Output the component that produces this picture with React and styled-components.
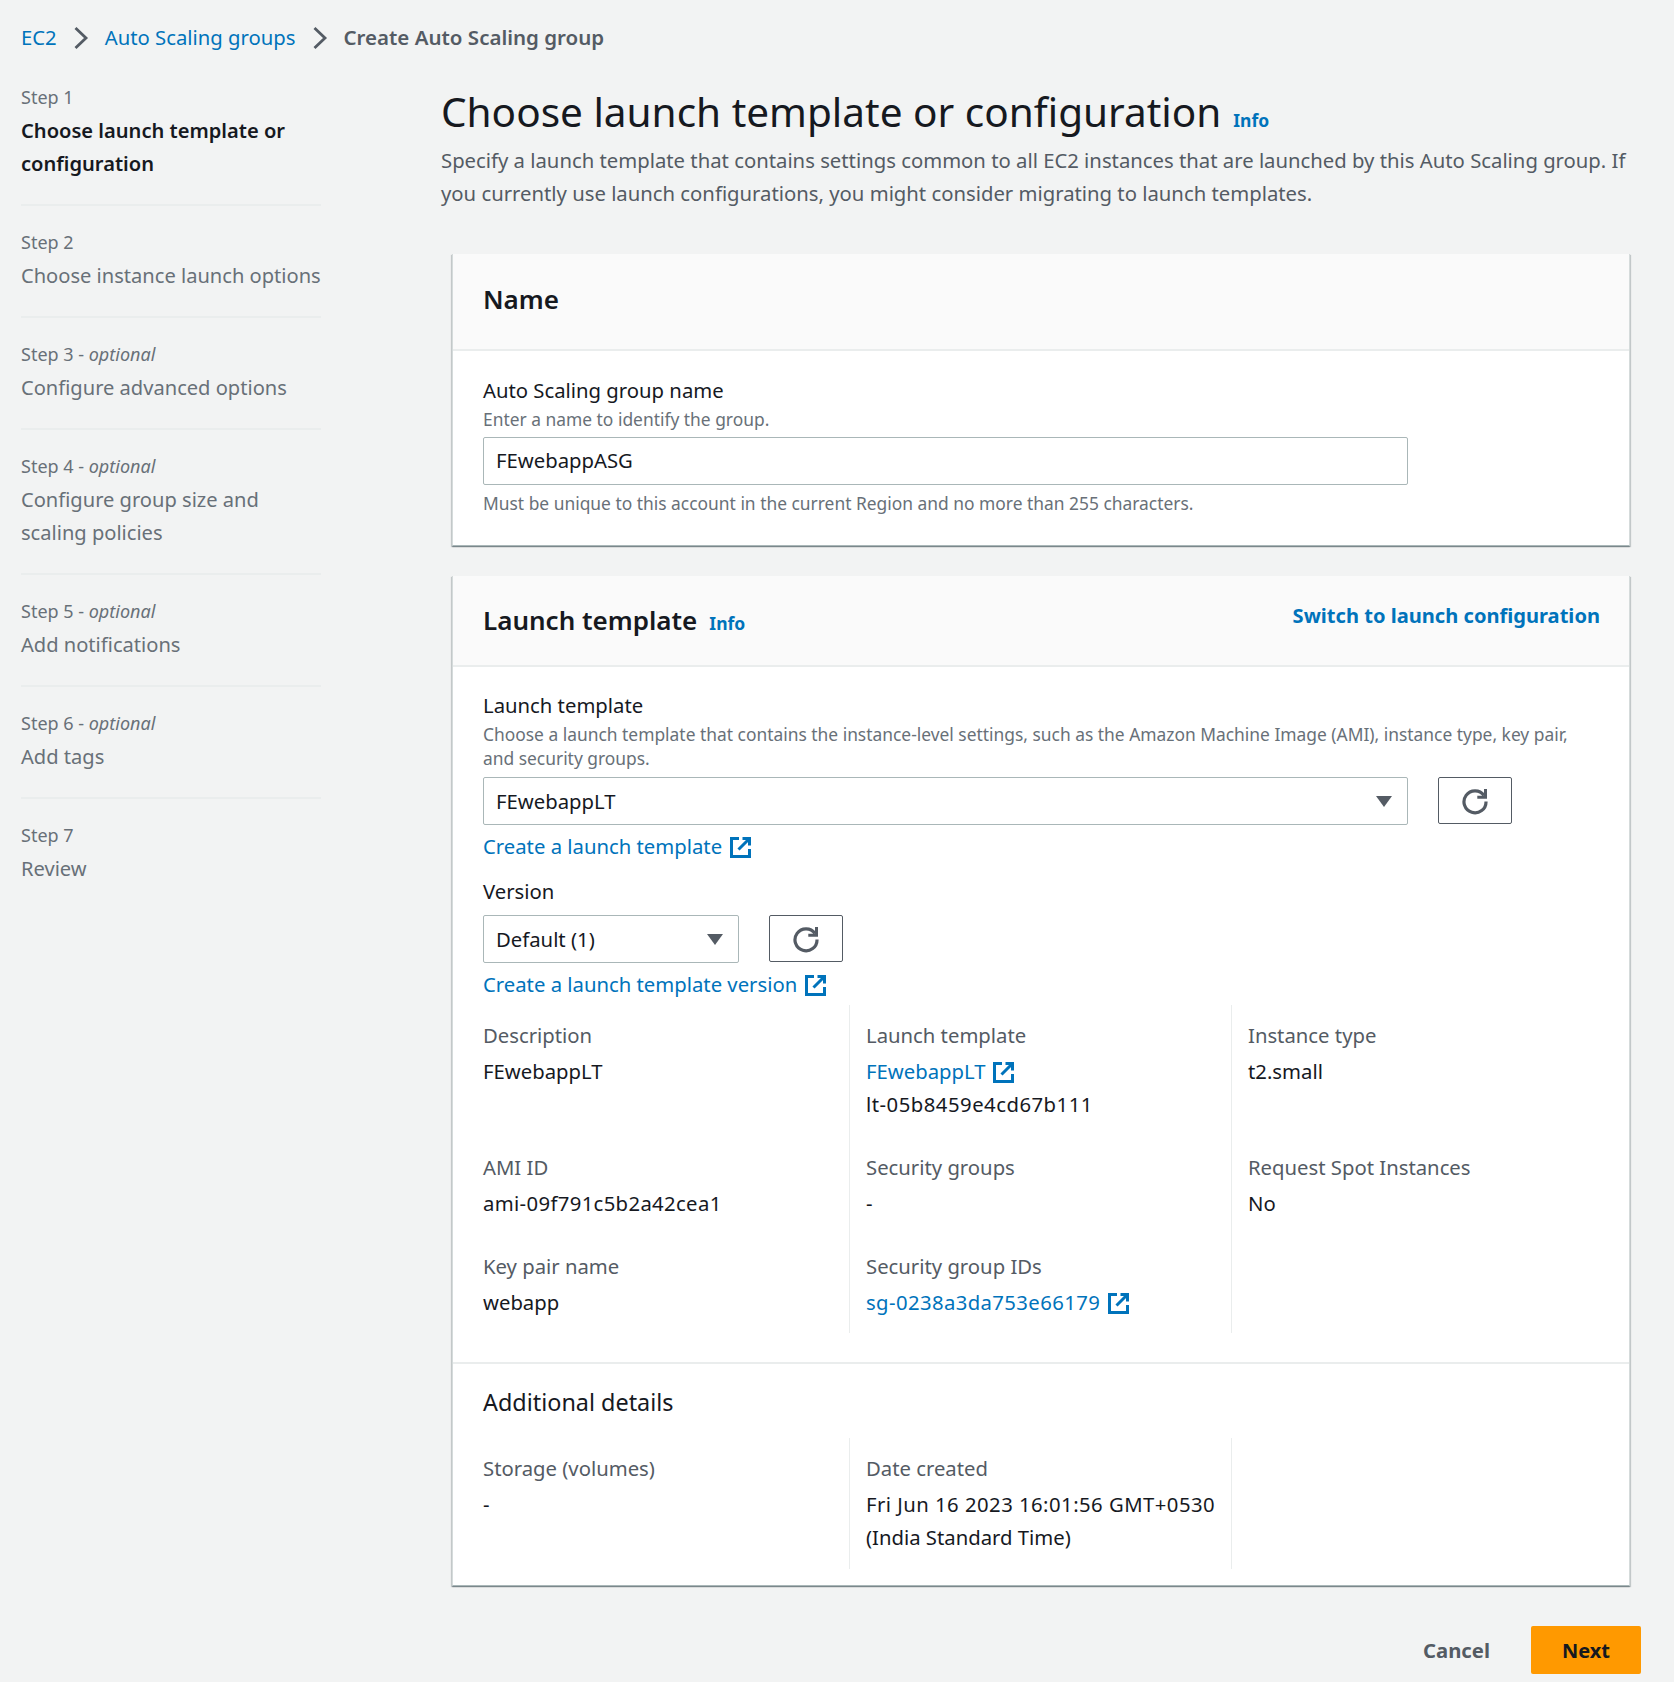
import React from "react";
import styled, { createGlobalStyle } from "styled-components";

const Global = createGlobalStyle`
  html, body { margin: 0; padding: 0; background: #f2f3f3; }
  body { font-family: "Noto Sans", "Open Sans", Arial, sans-serif; font-size: 20.3px; line-height: 33px; color: #16191f; }
  * { box-sizing: border-box; }
`;

const Page = styled.div`
  width: 1674px;
  padding: 21px 33px 7px 21px;
`;
const Crumbs = styled.nav`
  display: flex;
  align-items: center;
  height: 33px;
  gap: 16px;
`;
const CrumbLink = styled.a`
  color: #0073bb;
`;
const CrumbCurrent = styled.span`
  color: #545b64;
  font-weight: 600;
  font-size: 20.5px;
`;
const Layout = styled.div`
  display: grid;
  grid-template-columns: 300px 1fr;
  column-gap: 120px;
  margin-top: 31px;
`;
const Steps = styled.ol`
  list-style: none;
  margin: 0;
  padding: 0;
`;
const Step = styled.li`
  padding-bottom: 24px;
  margin-bottom: 24px;
  border-bottom: ${(p) => (p.$last ? "none" : "2px solid #eaeded")};
`;
const StepLabel = styled.div`
  font-size: 18px;
  line-height: 24px;
  color: #687078;
  margin-bottom: 5px;
  em { font-style: italic; }
`;
const StepName = styled.div`
  font-size: 20.1px;
  color: ${(p) => (p.$active ? "#16191f" : "#687078")};
  font-weight: ${(p) => (p.$active ? 600 : 400)};
`;
const Main = styled.main`
  min-width: 0;
`;
const TitleRow = styled.div`
  display: flex;
  align-items: baseline;
  gap: 12px;
  margin-bottom: 5px;
`;
const Title = styled.h1`
  margin: 0;
  font-size: 40.5px;
  line-height: 54px;
  font-weight: 400;
  color: #16191f;
`;
const InfoLink = styled.a`
  color: #0073bb;
  font-size: 17.5px;
  font-weight: 700;
`;
const Lead = styled.p`
  margin: 0 0 44px;
  color: #545b64;
`;
const Card = styled.section`
  margin: 0 11px 30px;
  background: #fff;
  border-left: 1px solid #d5dbdb;
  border-right: 1px solid #d5dbdb;
  border-bottom: 1px solid #aab7b8;
  box-shadow: 0 1px 1px 0 rgba(0, 28, 36, 0.3), 1px 1px 1px 0 rgba(0, 28, 36, 0.15), -1px 1px 1px 0 rgba(0, 28, 36, 0.15);
`;
const CardHead = styled.header`
  display: flex;
  justify-content: space-between;
  height: ${(p) => p.$h}px;
  padding: ${(p) => p.$top}px 29px 0 30px;
  background: #fafafa;
  border-bottom: 2px solid #eaeded;
`;
const CardTitle = styled.h2`
  margin: 0;
  font-size: 26px;
  line-height: 36px;
  font-weight: 600;
  color: #16191f;
  display: flex;
  align-items: baseline;
  gap: 12px;
`;
const Action = styled.a`
  color: #0073bb;
  font-weight: 700;
  font-size: 20.1px;
  margin-top: -3px;
`;
const CardBody = styled.div`
  padding: ${(p) => p.$top}px 30px ${(p) => p.$bottom}px;
`;
const Label = styled.div`
  color: #16191f;
  margin-top: ${(p) => p.$top || 0}px;
`;
const Hint = styled.div`
  font-size: 17.4px;
  line-height: 24px;
  color: #687078;
`;
const Input = styled.div`
  width: ${(p) => p.$w}px;
  height: 48px;
  margin-top: 6px;
  margin-bottom: 6px;
  padding: 6px 12px;
  background: #fff;
  border: 1px solid #aab7b8;
  border-radius: 2px;
  color: #16191f;
`;
const Picker = styled(Input)`
  display: flex;
  align-items: center;
  justify-content: space-between;
  margin: 0;
  padding-right: 15px;
`;
const Caret = styled.span`
  width: 0;
  height: 0;
  border-left: 8px solid transparent;
  border-right: 8px solid transparent;
  border-top: 11px solid #545b64;
`;
const PickerRow = styled.div`
  display: flex;
  align-items: flex-start;
  gap: 30px;
  margin-top: ${(p) => p.$top}px;
`;
const IconButton = styled.button`
  display: flex;
  align-items: center;
  justify-content: center;
  width: 74px;
  height: 47px;
  padding: 0;
  background: #fff;
  border: 1px solid #545b64;
  border-radius: 2px;
  color: #545b64;
`;
const LinkLine = styled.div`
  display: flex;
  align-items: center;
  gap: 8px;
  margin-top: ${(p) => p.$top || 0}px;
  color: #0073bb;
`;
const Details = styled.dl`
  display: grid;
  grid-template-columns: 366px 382px 382px;
  margin: ${(p) => p.$top}px 0 0;
`;
const Cell = styled.div`
  padding: ${(p) => p.$pt || 0}px 12px ${(p) => p.$pb}px ${(p) => (p.$col ? 16 : 0)}px;
  border-left: ${(p) => (p.$col ? "1px solid #eaeded" : "none")};
`;
const Term = styled.dt`
  color: #545b64;
  margin-bottom: 3px;
`;
const Value = styled.dd`
  margin: 0;
  color: #16191f;
`;
const Code = styled.span`
  letter-spacing: ${(p) => p.$s}px;
`;
const Rule = styled.hr`
  border: 0;
  border-top: 2px solid #eaeded;
  margin: 29px 0 0;
`;
const SubTitle = styled.h3`
  margin: 0;
  padding: 20px 30px 0;
  font-size: 23.4px;
  line-height: 36px;
  font-weight: 400;
  color: #16191f;
`;
const Footer = styled.footer`
  display: flex;
  justify-content: flex-end;
  align-items: center;
  gap: 41px;
  margin-top: 40px;
`;
const Cancel = styled.span`
  color: #545b64;
  font-weight: 700;
`;
const Next = styled.button`
  width: 110px;
  height: 48px;
  background: #ff9900;
  border: 0;
  border-radius: 2px;
  color: #16191f;
  font: 700 20px "Noto Sans", sans-serif;
`;

const ExternalIcon = () => (
  <svg width="22" height="22" viewBox="0 0 22 22" fill="none" stroke="#0073bb" strokeWidth="3">
    <path d="M9 2.5H1.5v18h18V13" />
    <path d="M12.5 2.5h7v7" />
    <path d="M19.5 2.5 8.5 13.5" />
  </svg>
);
const RefreshIcon = () => (
  <svg width="28" height="28" viewBox="0 0 28 28" fill="none" stroke="currentColor" strokeWidth="3.2">
    <path d="M23 8.5A11 11 0 1 0 25 14.5" />
    <path d="M24.5 2v8.2h-8.2" strokeWidth="3" />
  </svg>
);

const steps = [
  { n: "Step 1", t: "Choose launch template or configuration", active: true },
  { n: "Step 2", t: "Choose instance launch options" },
  { n: "Step 3", t: "Configure advanced options", opt: true },
  { n: "Step 4", t: "Configure group size and scaling policies", opt: true },
  { n: "Step 5", t: "Add notifications", opt: true },
  { n: "Step 6", t: "Add tags", opt: true },
  { n: "Step 7", t: "Review" },
];

const Chevron = () => (
  <svg width="16" height="24" viewBox="0 0 16 24" fill="none" stroke="#545b64" strokeWidth="2.8">
    <path d="M2.5 2 13 12 2.5 22" />
  </svg>
);

export default function App() {
  return (
    <Page>
      <Global />
      <Crumbs>
        <CrumbLink>EC2</CrumbLink>
        <Chevron />
        <CrumbLink>Auto Scaling groups</CrumbLink>
        <Chevron />
        <CrumbCurrent>Create Auto Scaling group</CrumbCurrent>
      </Crumbs>
      <Layout>
        <Steps>
          {steps.map((s, i) => (
            <Step key={s.n} $last={i === steps.length - 1}>
              <StepLabel>
                {s.n}
                {s.opt && (
                  <>
                    {" - "}
                    <em>optional</em>
                  </>
                )}
              </StepLabel>
              <StepName $active={s.active}>{s.t}</StepName>
            </Step>
          ))}
        </Steps>
        <Main>
          <TitleRow>
            <Title>Choose launch template or configuration</Title>
            <InfoLink>Info</InfoLink>
          </TitleRow>
          <Lead>
            Specify a launch template that contains settings common to all EC2 instances that are launched by this Auto
            Scaling group. If you currently use launch configurations, you might consider migrating to launch templates.
          </Lead>
          <Card>
            <CardHead $h={97} $top={27}>
              <CardTitle>Name</CardTitle>
            </CardHead>
            <CardBody $top={23} $bottom={30}>
              <Label>Auto Scaling group name</Label>
              <Hint>Enter a name to identify the group.</Hint>
              <Input $w={925}>FEwebappASG</Input>
              <Hint>Must be unique to this account in the current Region and no more than 255 characters.</Hint>
            </CardBody>
          </Card>
          <Card>
            <CardHead $h={91} $top={26}>
              <CardTitle>
                Launch template <InfoLink>Info</InfoLink>
              </CardTitle>
              <Action>Switch to launch configuration</Action>
            </CardHead>
            <CardBody $top={22} $bottom={0}>
              <Label>Launch template</Label>
              <Hint>
                Choose a launch template that contains the instance-level settings, such as the Amazon Machine Image
                (AMI), instance type, key pair, and security groups.
              </Hint>
              <PickerRow $top={7}>
                <Picker $w={925}>
                  FEwebappLT
                  <Caret />
                </Picker>
                <IconButton>
                  <RefreshIcon />
                </IconButton>
              </PickerRow>
              <LinkLine $top={5}>
                Create a launch template <ExternalIcon />
              </LinkLine>
              <Label $top={12}>Version</Label>
              <PickerRow $top={7}>
                <Picker $w={256}>
                  Default (1)
                  <Caret />
                </Picker>
                <IconButton>
                  <RefreshIcon />
                </IconButton>
              </PickerRow>
              <LinkLine $top={5}>
                Create a launch template version <ExternalIcon />
              </LinkLine>
              <Details $top={4}>
                <Cell $pt={14} $pb={30}>
                  <Term>Description</Term>
                  <Value>FEwebappLT</Value>
                </Cell>
                <Cell $col $pt={14} $pb={30}>
                  <Term>Launch template</Term>
                  <Value>
                    <LinkLine>
                      FEwebappLT <ExternalIcon />
                    </LinkLine>
                    <Code $s={0.5}>lt-05b8459e4cd67b111</Code>
                  </Value>
                </Cell>
                <Cell $col $pt={14} $pb={30}>
                  <Term>Instance type</Term>
                  <Value>t2.small</Value>
                </Cell>
                <Cell $pb={30}>
                  <Term>AMI ID</Term>
                  <Value>
                    <Code $s={0.35}>ami-09f791c5b2a42cea1</Code>
                  </Value>
                </Cell>
                <Cell $col $pb={30}>
                  <Term>Security groups</Term>
                  <Value>-</Value>
                </Cell>
                <Cell $col $pb={30}>
                  <Term>Request Spot Instances</Term>
                  <Value>No</Value>
                </Cell>
                <Cell $pb={14}>
                  <Term>Key pair name</Term>
                  <Value>webapp</Value>
                </Cell>
                <Cell $col $pb={14}>
                  <Term>Security group IDs</Term>
                  <Value>
                    <LinkLine>
                      <Code $s={0.4}>sg-0238a3da753e66179</Code> <ExternalIcon />
                    </LinkLine>
                  </Value>
                </Cell>
                <Cell $col $pb={14} />
              </Details>
            </CardBody>
            <Rule />
            <SubTitle>Additional details</SubTitle>
            <CardBody $top={18} $bottom={16}>
              <Details $top={0}>
                <Cell $pt={14} $pb={15}>
                  <Term>Storage (volumes)</Term>
                  <Value>-</Value>
                </Cell>
                <Cell $col $pt={14} $pb={15}>
                  <Term>Date created</Term>
                  <Value>
                    <Code $s={0.47}>Fri Jun 16 2023 16:01:56 GMT+0530</Code> (India Standard Time)
                  </Value>
                </Cell>
                <Cell $col $pt={14} $pb={15} />
              </Details>
            </CardBody>
          </Card>
          <Footer>
            <Cancel>Cancel</Cancel>
            <Next>Next</Next>
          </Footer>
        </Main>
      </Layout>
    </Page>
  );
}
